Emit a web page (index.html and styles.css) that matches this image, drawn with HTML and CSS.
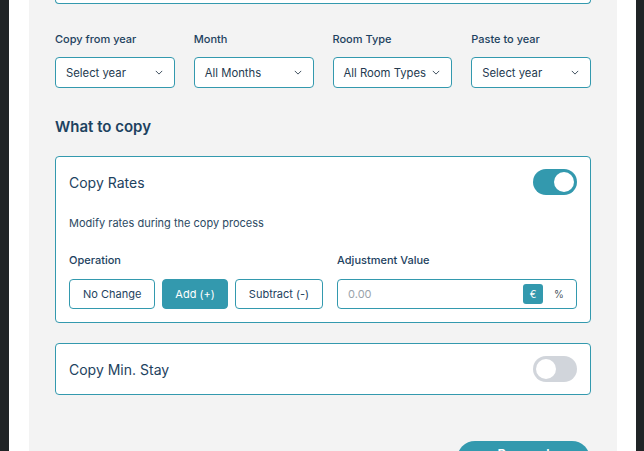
FILE: index.html
```html
<!DOCTYPE html>
<html>
<head>
<meta charset="utf-8">
<link rel="stylesheet" href="styles.css">
</head>
<body>
<div class="frame">
  <div class="sheet">
    <div class="panel">
      <div class="card-tail"></div>

      <div class="filters">
        <div class="field">
          <label class="label">Copy from year</label>
          <div class="select"><span>Select year</span><svg class="chev" viewBox="0 0 10 6"><path d="M1 1l4 4 4-4"/></svg></div>
        </div>
        <div class="field">
          <label class="label">Month</label>
          <div class="select"><span>All Months</span><svg class="chev" viewBox="0 0 10 6"><path d="M1 1l4 4 4-4"/></svg></div>
        </div>
        <div class="field">
          <label class="label">Room Type</label>
          <div class="select"><span>All Room Types</span><svg class="chev" viewBox="0 0 10 6"><path d="M1 1l4 4 4-4"/></svg></div>
        </div>
        <div class="field">
          <label class="label">Paste to year</label>
          <div class="select"><span>Select year</span><svg class="chev" viewBox="0 0 10 6"><path d="M1 1l4 4 4-4"/></svg></div>
        </div>
      </div>

      <h2 class="section-title">What to copy</h2>

      <div class="card">
        <div class="card-head">
          <span class="card-title">Copy Rates</span>
          <span class="toggle on"><span class="knob"></span></span>
        </div>
        <p class="desc">Modify rates during the copy process</p>
        <div class="options">
          <div class="op">
            <div class="label">Operation</div>
            <div class="btns">
              <button class="btn">No Change</button>
              <button class="btn active">Add (+)</button>
              <button class="btn">Subtract (-)</button>
            </div>
          </div>
          <div class="adj">
            <div class="label">Adjustment Value</div>
            <div class="input">
              <span class="placeholder">0.00</span>
              <span class="unit sel">€</span>
              <span class="unit">%</span>
            </div>
          </div>
        </div>
      </div>

      <div class="card small">
        <div class="card-head">
          <span class="card-title">Copy Min. Stay</span>
          <span class="toggle"><span class="knob"></span></span>
        </div>
      </div>

      <div class="actions">
        <button class="proceed">Proceed</button>
      </div>
    </div>
  </div>
</div>
</body>
</html>
```
FILE: styles.css
```css
* { box-sizing: border-box; }
html, body { margin: 0; padding: 0; height: 100%; overflow: hidden; }
body {
  background: #202426;
  font-family: Inter, "Noto Sans", "Liberation Sans", sans-serif;
  color: #1d4260;
}
.frame {
  height: 451px;
  padding-left: 9px;
  width: 636px;
}
.sheet {
  background: #ffffff;
  height: 100%;
  padding: 0 19px 0 20px;
}
.panel {
  background: #f3f3f3;
  height: 100%;
  padding: 0 26px;
  overflow: hidden;
}
.card-tail {
  height: 4px;
  border: 1px solid #3399ae;
  border-top: none;
  border-radius: 0 0 6px 6px;
  background: #fff;
}
.filters {
  display: grid;
  grid-template-columns: repeat(4, 1fr);
  column-gap: 19px;
  margin-top: 28px;
}
.field { display: flex; flex-direction: column; }
.label {
  font-size: 11px;
  line-height: 14px;
  font-weight: 500;
  color: #1d4260;
}
.field .label { margin-bottom: 11px; }
.select {
  height: 31px;
  background: #fff;
  border: 1px solid #3399ae;
  border-radius: 4px;
  display: flex;
  align-items: center;
  justify-content: space-between;
  padding: 0 11px 0 10px;
  font-size: 11.3px;
  color: #243a4f;
}
.chev {
  width: 8px;
  height: 5px;
  fill: none;
  stroke: #3a4b5a;
  stroke-width: 1.2;
}
.section-title {
  margin: 29px 0 19px;
  font-size: 15px;
  line-height: 20px;
  font-weight: 600;
  color: #1d4260;
}
.card {
  background: #fff;
  border: 1px solid #3399ae;
  border-radius: 4px;
  padding: 12px 13px 13px;
}
.card.small { margin-top: 20px; padding-bottom: 12px; }
.card-head {
  display: flex;
  align-items: center;
  justify-content: space-between;
  height: 26px;
}
.card-title {
  font-size: 14px;
  color: #1d4260;
}
.toggle {
  width: 44px;
  height: 26px;
  border-radius: 13px;
  background: #d1d5db;
  display: flex;
  align-items: center;
  padding: 0 3px;
}
.toggle.on { background: #3399ae; justify-content: flex-end; }
.knob {
  width: 20px;
  height: 20px;
  border-radius: 50%;
  background: #fff;
}
.desc {
  margin: 21px 0 0;
  font-size: 11px;
  line-height: 14px;
  color: #2c4a63;
}
.options {
  display: flex;
  gap: 14px;
  margin-top: 23px;
}
.op .label, .adj .label { margin-bottom: 12px; }
.btns { display: flex; gap: 7px; }
.btn {
  height: 30px;
  padding: 0 13px;
  border: 1px solid #3399ae;
  border-radius: 4px;
  background: #fff;
  font-family: inherit;
  font-size: 11px;
  font-weight: 400;
  color: #1d4260;
}
.btn.active { background: #3399ae; color: #fff; padding: 0 12px; }
.adj { flex: 1; }
.input {
  height: 30px;
  border: 1px solid #3399ae;
  border-radius: 4px;
  background: #fff;
  display: flex;
  align-items: center;
  padding: 0 7px 0 10px;
  font-size: 11px;
}
.placeholder { flex: 1; color: #9aa3ab; }
.unit {
  width: 20px;
  height: 20px;
  display: flex;
  align-items: center;
  justify-content: center;
  border-radius: 3px;
  font-size: 10px;
  color: #4a5560;
  margin-left: 6px;
}
.unit.sel { background: #3399ae; color: #fff; }
.actions {
  display: flex;
  justify-content: flex-end;
  margin-top: 46px;
}
.proceed {
  width: 133px;
  height: 36px;
  border: none;
  border-radius: 18px;
  background: #3399ae;
  color: #fff;
  font-family: inherit;
  font-size: 13px;
  font-weight: 600;
  line-height: 16px;
  padding: 5px 0 0;
  display: flex;
  align-items: flex-start;
  justify-content: center;
  margin-right: 1px;
}
```
